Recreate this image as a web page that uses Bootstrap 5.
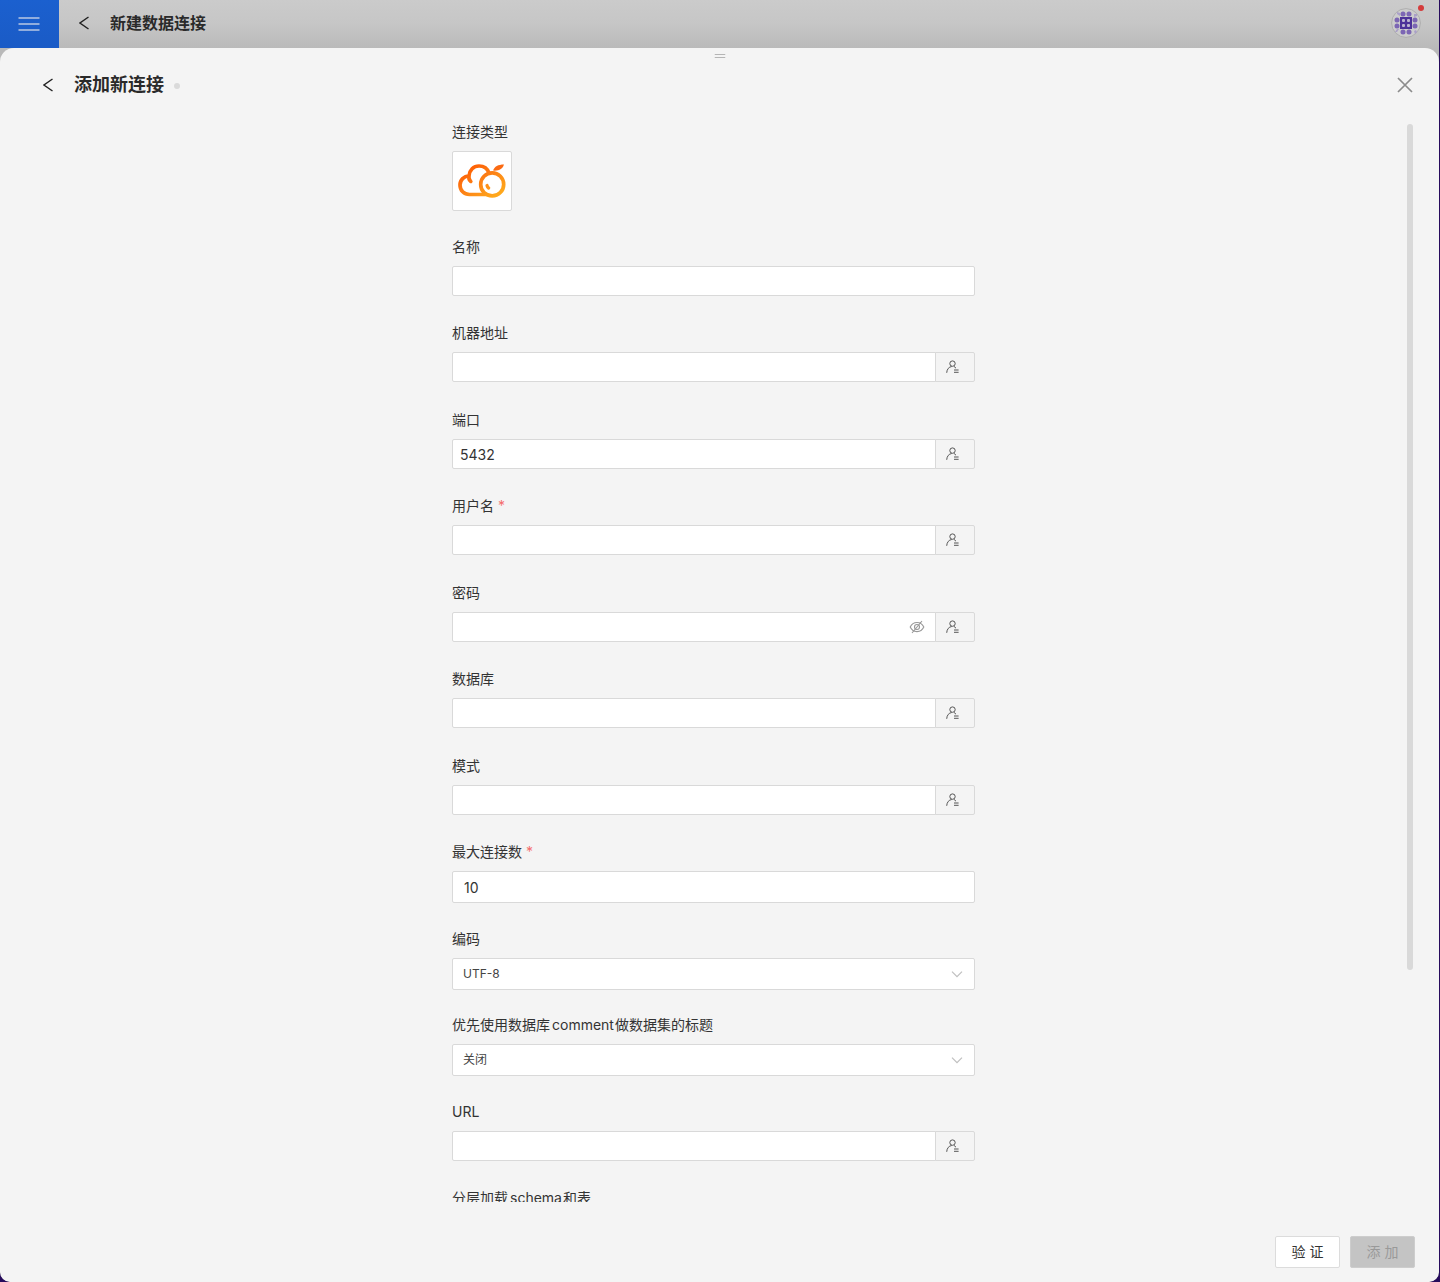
<!DOCTYPE html>
<html lang="zh-CN">
<head>
<meta charset="utf-8">
<meta name="viewport" content="width=device-width, initial-scale=1">
<title>新建数据连接</title>
<link href="https://cdn.jsdelivr.net/npm/bootstrap@5.3.0/dist/css/bootstrap.min.css" rel="stylesheet">
<style>
  body { font-family: Inter, "Noto Sans CJK SC", sans-serif; font-size: 14px; line-height: 20px; color: #333; background: #260b5c; }
  svg { display: block; flex: none; }
  .shell { height: 100vh; margin-right: 1px; background: #b9b9b9; border-radius: 0 0 10px 10px; }
  .topbar { height: 48px; padding-bottom: 2px; background: linear-gradient(#cbcbcb, #c6c6c6 50%, #bababa); }
  .menu-btn { width: 59px; height: 48px; margin-bottom: -2px; padding: 0 1px 0 0; background: linear-gradient(#1b60cf, #1a5bc6); border-radius: 0; }
  .top-title { font-size: 16px; line-height: 24px; font-weight: 600; color: #2a2a2a; margin-left: 21px; }
  .avatar-btn { width: 30px; height: 30px; margin-right: 18px; }
  .alert-dot { width: 6px; height: 6px; background: #d43c3c; top: -3px; right: -3px; }
  .sheet { background: #f4f4f4; border-radius: 14px 14px 10px 10px; min-height: 0; }
  .grip { top: 6px; }
  .sheet-head { height: 69px; padding: 4px 26px 0 43px; }
  .sheet-title { font-size: 18px; line-height: 26px; font-weight: 600; color: #2a2a2a; margin-left: 21px; }
  .status-dot { width: 6px; height: 6px; background: #dadada; margin: 3px 0 0 10px; }
  .plain-btn { line-height: 0; }
  .scroll-area { min-height: 0; overflow-y: auto; scrollbar-width: none; padding: 5px 36px 0 24px; }
  .scroll-area::-webkit-scrollbar { display: none; }
  .conn-form { max-width: 523px; }
  .type-field { height: 115px; }
  .field-grid { display: grid; grid-auto-rows: 86px 87px; }
  .caption { display: block; line-height: 20px; margin-bottom: 9px; }
  .caption .latin { margin: 0 1px 0 2px; }
  .caption .req { color: #f56c6c; margin-left: 4px; }
  .type-tile { width: 60px; height: 60px; background: #fff; border: 1px solid #d9d9d9; border-radius: 2px; }
  .form-control, .form-select { height: 30px; min-height: 0; padding: 0 7px; font-size: 14px; line-height: 20px; color: #333; background: #fff; border: 1px solid #d9d9d9; border-radius: 2px; }
  .form-control.tall { height: 32px; padding: 0 11px; }
  .form-select { height: 32px; padding: 0 30px 0 10px; font-size: 12px; color: #444; }
  .input-group .btn { width: 40px; height: 30px; padding: 0 0 0 10px; background: #f4f4f4; border: 1px solid #d9d9d9; border-radius: 2px; }
  .eye { right: 50px; top: 8px; z-index: 6; }
  .chev { right: 12px; top: 11px; pointer-events: none; }
  .thumb { width: 6px; top: 76px; bottom: 312px; right: 26px; background: #d9d9d9; }
  .sheet-foot { height: 80px; padding: 20px 24px 0; gap: 10px; }
  .foot-btn { width: 65px; height: 32px; padding: 0; font-size: 14px; line-height: 20px; border-radius: 2px; border: 1px solid #dcdcdc; background: #fff; color: #333; }
  .foot-btn:disabled { background: #c4c4c4; border-color: #cdcdcd; color: #999; opacity: 1; }
</style>
<script src="https://cdn.jsdelivr.net/npm/bootstrap@5.3.0/dist/js/bootstrap.bundle.min.js"></script>
</head>
<body>
<svg width="0" height="0" class="position-absolute" aria-hidden="true">
  <symbol id="i-user" viewBox="0 0 14 14"><g fill="none" stroke="#555" stroke-width="1"><circle cx="6.500" cy="3.600" r="2.700"/><path d="M.7 12.800C.9 9.200 2.900 6.900 5.700 6.500M7.900 6.300L10 8.200M8 10h4.600M8 12.300h4.600"/></g></symbol>
  <symbol id="i-chev" viewBox="0 0 12 10"><path d="M1 2.600L6 7.600L11 2.600" fill="none" stroke="#bfbfbf" stroke-width="1.200"/></symbol>
  <symbol id="i-back" viewBox="0 0 10 14"><path d="M9.500 1L1 7L9.500 13" fill="none" stroke="#222" stroke-width="1.400"/></symbol>
</svg>
<div class="shell d-flex flex-column overflow-hidden">
  <header class="topbar d-flex align-items-center flex-shrink-0">
    <button type="button" class="menu-btn btn border-0 d-flex align-items-center justify-content-center" aria-label="菜单">
      <svg width="22" height="16" viewBox="0 0 22 16"><path d="M.5 2h21M.5 8h21M.5 14h21" stroke="#b9c8e4" stroke-width="1.500"/></svg>
    </button>
    <a href="#" class="ms-3 ps-1" aria-label="返回"><svg width="10" height="14"><use href="#i-back"/></svg></a>
    <h1 class="top-title mb-0">新建数据连接</h1>
    <a href="#" class="avatar-btn ms-auto position-relative" aria-label="账户">
      <svg width="30" height="30" viewBox="0 0 30 30"><circle cx="15" cy="15" r="14.400" fill="#cdcdcd" stroke="#aaa" stroke-width=".9"/>
        <g fill="#7c66b4"><circle cx="12" cy="6" r="2.500"/><circle cx="18" cy="6" r="2.500"/><circle cx="12" cy="24" r="2.500"/><circle cx="18" cy="24" r="2.500"/><circle cx="6" cy="12" r="2.500"/><circle cx="6" cy="18" r="2.500"/><circle cx="24" cy="12" r="2.500"/><circle cx="24" cy="18" r="2.500"/></g>
        <g fill="#aaa0c8"><path d="M6 4l3 1v3l-3-2zM26 6l-3 0v3l3-1zM4 24l2-3 2 0-2 3zM24 26l-1-3 2-1 1 2z"/></g>
        <rect x="9" y="9" width="12" height="12" fill="#4d3399"/>
        <g fill="#bdb5d0"><rect x="11" y="11" width="3" height="3" rx="1"/><rect x="16" y="11" width="3" height="3" rx="1"/><rect x="11" y="16" width="3" height="3" rx="1"/><rect x="16" y="16" width="3" height="3" rx="1"/></g></svg>
      <span class="alert-dot position-absolute rounded-circle"></span>
    </a>
  </header>
  <main class="sheet position-relative d-flex flex-column flex-grow-1">
    <svg class="grip position-absolute start-50 translate-middle-x" width="11" height="5" viewBox="0 0 11 5"><path d="M0 .5h11M0 3.500h11" stroke="#b5b5b5"/></svg>
    <div class="sheet-head d-flex align-items-center flex-shrink-0">
      <a href="#" aria-label="返回"><svg width="10" height="14"><use href="#i-back"/></svg></a>
      <h2 class="sheet-title mb-0">添加新连接</h2>
      <span class="status-dot rounded-circle"></span>
      <button type="button" class="plain-btn btn p-0 border-0 ms-auto" aria-label="关闭"><svg width="16" height="16" viewBox="0 0 16 16"><path d="M1 1l14 14M15 1L1 15" stroke="#8c8c8c" stroke-width="1.700"/></svg></button>
    </div>
    <div class="scroll-area flex-grow-1">
      <form class="conn-form mx-auto" id="conn">
        <div class="type-field">
          <span class="caption">连接类型</span>
          <div class="type-tile d-flex align-items-center justify-content-center">
            <svg width="48" height="34" viewBox="0 0 48 34"><defs><linearGradient id="og" x1="12" y1="0" x2="34" y2="34" gradientUnits="userSpaceOnUse"><stop offset="0" stop-color="#ff5a00"/><stop offset=".4" stop-color="#fc7a14"/><stop offset="1" stop-color="#ffa81c"/></linearGradient></defs>
              <g fill="none" stroke="url(#og)" stroke-width="3.700" stroke-linecap="round"><path d="M29 30.500H11.500C6 30.500 2 26.500 2 21C2 16 6 12 11 11.800C11.500 6 15.500 2 21 2C26 2 29.500 4.500 31 9M11 12c-.4 2.400 .3 4.300 1.800 5.400"/><circle cx="34.200" cy="20.400" r="11.500"/><path d="M29 21.500c.3 1.200.9 2 1.700 2.600" stroke-width="3.200"/></g>
              <path d="M35 6.600C36.500 2.500 40 .5 46 .5C44.500 5 41.500 7 35 6.600Z" fill="#fb6a12"/></svg>
          </div>
        </div>
        <div class="field-grid">
          <div><label class="caption" for="f1">名称</label><input class="form-control" id="f1"></div>
          <div><label class="caption" for="f2">机器地址</label><div class="input-group"><input class="form-control" id="f2"><button type="button" class="btn" aria-label="用户属性"><svg width="14" height="14"><use href="#i-user"/></svg></button></div></div>
          <div><label class="caption" for="f3">端口</label><div class="input-group"><input class="form-control" id="f3" value="5432"><button type="button" class="btn" aria-label="用户属性"><svg width="14" height="14"><use href="#i-user"/></svg></button></div></div>
          <div><label class="caption" for="f4">用户名<span class="req">*</span></label><div class="input-group"><input class="form-control" id="f4"><button type="button" class="btn" aria-label="用户属性"><svg width="14" height="14"><use href="#i-user"/></svg></button></div></div>
          <div><label class="caption" for="f5">密码</label><div class="input-group"><input type="password" class="form-control" id="f5"><svg class="eye position-absolute" width="16" height="14" viewBox="0 0 16 14" fill="none" stroke="#999" stroke-width="1.100"><path d="M1.200 7C4 .9 12 .9 14.800 7C12 13.100 4 13.100 1.200 7ZM3 13L13 1"/><circle cx="8" cy="7" r="2.500"/></svg><button type="button" class="btn" aria-label="用户属性"><svg width="14" height="14"><use href="#i-user"/></svg></button></div></div>
          <div><label class="caption" for="f6">数据库</label><div class="input-group"><input class="form-control" id="f6"><button type="button" class="btn" aria-label="用户属性"><svg width="14" height="14"><use href="#i-user"/></svg></button></div></div>
          <div><label class="caption" for="f7">模式</label><div class="input-group"><input class="form-control" id="f7"><button type="button" class="btn" aria-label="用户属性"><svg width="14" height="14"><use href="#i-user"/></svg></button></div></div>
          <div><label class="caption" for="f8">最大连接数<span class="req">*</span></label><input class="form-control tall" id="f8" value="10"></div>
          <div><label class="caption" for="f9">编码</label><div class="position-relative"><select class="form-select" id="f9"><option>UTF-8</option></select><svg class="chev position-absolute" width="12" height="10"><use href="#i-chev"/></svg></div></div>
          <div><label class="caption" for="f10">优先使用数据库<span class="latin">comment</span>做数据集的标题</label><div class="position-relative"><select class="form-select" id="f10"><option>关闭</option></select><svg class="chev position-absolute" width="12" height="10"><use href="#i-chev"/></svg></div></div>
          <div><label class="caption" for="f11">URL</label><div class="input-group"><input class="form-control" id="f11"><button type="button" class="btn" aria-label="用户属性"><svg width="14" height="14"><use href="#i-user"/></svg></button></div></div>
          <div><label class="caption" for="f12">分层加载<span class="latin">schema</span>和表</label><div class="position-relative"><select class="form-select" id="f12"><option>关闭</option></select></div></div>
        </div>
      </form>
    </div>
    <div class="thumb position-absolute rounded-pill"></div>
    <footer class="sheet-foot d-flex align-items-center justify-content-end flex-shrink-0">
      <button type="submit" form="conn" class="foot-btn btn">验 证</button>
      <button type="button" class="foot-btn btn" disabled>添 加</button>
    </footer>
  </main>
</div>
</body>
</html>
